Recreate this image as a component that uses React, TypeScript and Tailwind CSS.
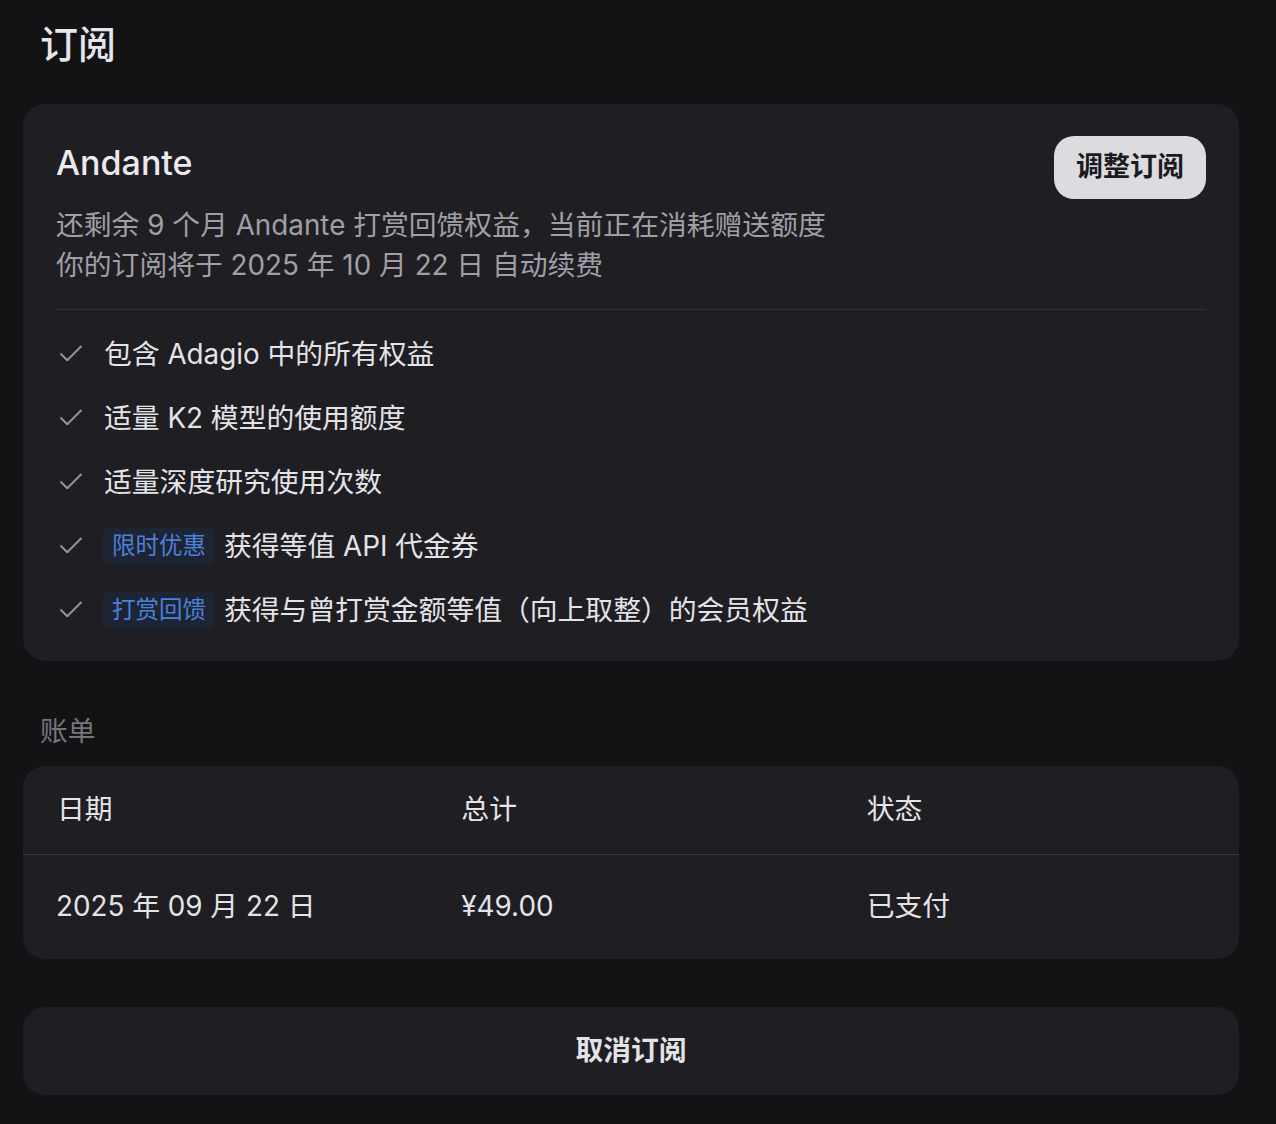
import { Check } from 'lucide-react';

const font = { fontFamily: '"Inter", "Noto Sans CJK SC", sans-serif' };

const perks: { badge?: string; text: string }[] = [
  { text: '包含 Adagio 中的所有权益' },
  { text: '适量 K2 模型的使用额度' },
  { text: '适量深度研究使用次数' },
  { badge: '限时优惠', text: '获得等值 API 代金券' },
  { badge: '打赏回馈', text: '获得与曾打赏金额等值（向上取整）的会员权益' },
];

export default function App() {
  return (
    <div className="min-h-[1124px] w-full bg-[#131215] pl-[23px] pr-[37px] pb-[28px]" style={font}>
      {/* Title */}
      <h1 className="pl-[17px] pt-[20px] text-[38px] leading-[48px] font-medium text-[#e6e5ea]">订阅</h1>

      {/* Plan card */}
      <div className="mt-[36px] rounded-[22px] bg-[#1f1e22] px-[33px] pt-[32px] pb-[19px]">
        <div className="flex items-start justify-between">
          <div>
            <div className="mt-[5px] text-[34px] leading-[44px] font-medium text-[#ebeaef]">Andante</div>
            <div className="mt-[20px] text-[27.8px] leading-[40px] text-[#a09fa6]">
              <p>还剩余 9 个月 Andante 打赏回馈权益，当前正在消耗赠送额度</p>
              <p>你的订阅将于 2025 年 10 月 22 日 自动续费</p>
            </div>
          </div>
          <button className="h-[63px] w-[152px] rounded-[20px] bg-[#dcdbe0] text-[27px] font-semibold text-[#1b1a1e]">
            调整订阅
          </button>
        </div>

        <div className="mt-[24px] h-px bg-[#343338]" />

        <ul className="mt-[12px]">
          {perks.map((p) => (
            <li key={p.text} className="flex h-[64px] items-center">
              <Check size={30} strokeWidth={1.5} className="text-[#98979d]" />
              <div className="ml-[18px] flex items-center text-[27.8px] leading-[40px] text-[#e4e3e8]">
                {p.badge && (
                  <span className="-ml-[1px] mr-[9px] flex h-[38px] items-center rounded-[7px] bg-[#1d2433] px-[9px] text-[23.5px] text-[#4d80d8]">
                    {p.badge}
                  </span>
                )}
                <span>{p.text}</span>
              </div>
            </li>
          ))}
        </ul>
      </div>

      {/* Billing */}
      <div className="mt-[50px] pl-[17px] text-[27.8px] leading-[40px] text-[#76757b]">账单</div>
      <div className="mt-[15px] rounded-[22px] bg-[#1f1e22] text-[27.8px] text-[#e4e3e8]">
        <div className="grid h-[88px] grid-cols-3 items-center">
          <div className="pl-[34px]">日期</div>
          <div className="pl-[33px]">总计</div>
          <div className="pl-[33px]">状态</div>
        </div>
        <div className="h-px bg-[#3a393e]" />
        <div className="grid h-[104px] grid-cols-3 items-center">
          <div className="pl-[33px]">2025 年 09 月 22 日</div>
          <div className="pl-[33px]">¥49.00</div>
          <div className="pl-[33px]">已支付</div>
        </div>
      </div>

      {/* Cancel */}
      <button className="mt-[48px] flex h-[88px] w-full items-center justify-center rounded-[22px] bg-[#1f1e22] text-[27.8px] font-semibold text-[#e4e3e8]">
        取消订阅
      </button>
    </div>
  );
}
